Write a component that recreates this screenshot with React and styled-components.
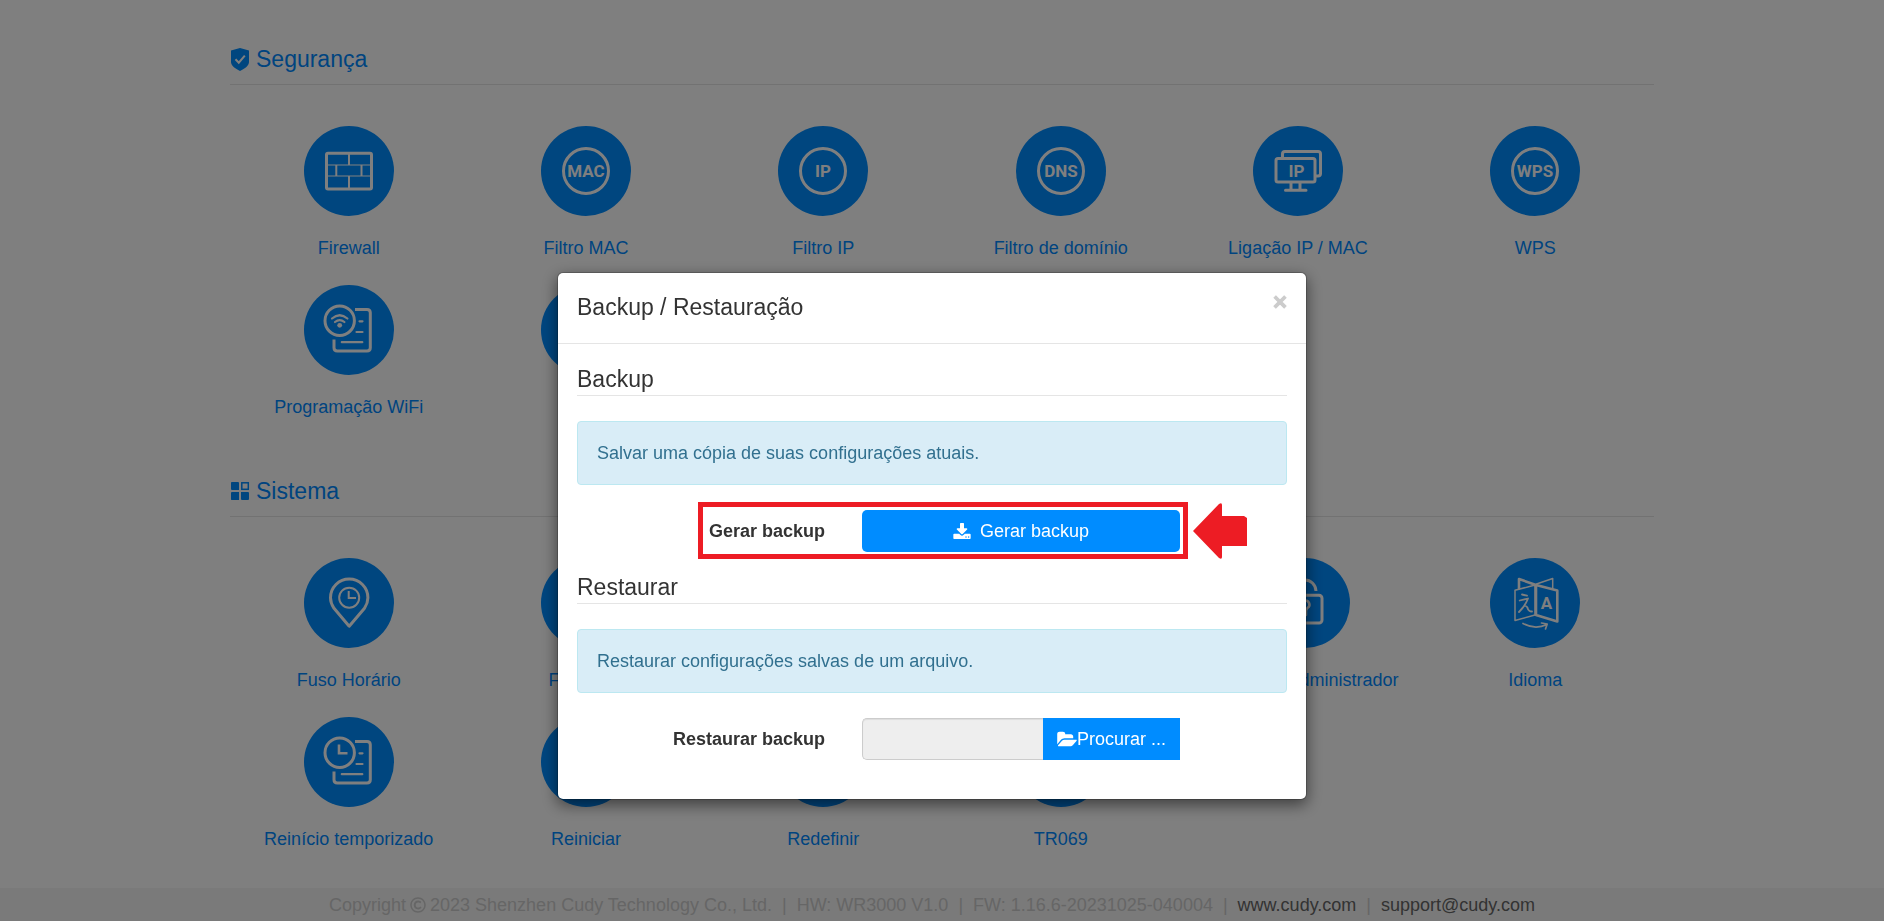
import React from "react";
import styled, { createGlobalStyle } from "styled-components";
import { FaRegCopyright } from "react-icons/fa";

const GlobalStyle = createGlobalStyle`
  * {
    box-sizing: border-box;
  }
  body {
    margin: 0;
    background-color: #ffffff;
    color: #333333;
    font-family: "Liberation Sans", Arial, sans-serif;
    font-size: 18px;
    line-height: 26px;
  }
  a {
    text-decoration: none;
  }
`;

const Page = styled.div`
  display: flex;
  flex-direction: column;
  min-height: 100vh;
`;

const Content = styled.main`
  width: 100%;
  max-width: 1424px;
  margin: 0 auto;
  padding: 12px 0;
`;

const Section = styled.section`
  padding-top: 34px;
`;

const SectionTitle = styled.h2`
  display: flex;
  align-items: center;
  gap: 6px;
  margin: 0 0 41px;
  padding: 0 0 12px;
  border-bottom: 1px solid #e5e5e5;
  color: #0088ff;
  font-size: 23px;
  font-weight: 400;
  line-height: 26px;
`;

const TileGrid = styled.div`
  display: grid;
  grid-template-columns: repeat(6, 1fr);
`;

const Tile = styled.div`
  min-width: 0;
  padding: 0 32px 24px;
  text-align: center;
`;

const TileLink = styled.a`
  display: inline-flex;
  flex-direction: column;
  align-items: center;
  gap: 19px;
  vertical-align: top;
  color: #0088ff;
  white-space: nowrap;
`;

const RoundIcon = styled.svg`
  width: 90px;
  height: 90px;
  border-radius: 50%;
  background-color: #008cff;
  fill: none;
  stroke: #ffffff;
  stroke-width: 3;
  stroke-linecap: round;
  stroke-linejoin: round;
  text {
    fill: #ffffff;
    stroke: none;
    text-anchor: middle;
    font-family: Roboto, sans-serif;
    font-size: 17px;
    font-weight: 700;
  }
`;

const Footer = styled.footer`
  display: flex;
  justify-content: center;
  align-items: center;
  gap: 10px;
  margin-top: auto;
  padding: 4px 20px 4px 0;
  background-color: #f5f5f5;
  color: #cccccc;
`;

const Copyright = styled.span`
  display: flex;
  align-items: center;
  gap: 4px;
`;

const FooterLink = styled.a`
  color: #666666;
`;

const Backdrop = styled.div`
  position: fixed;
  inset: 0;
  display: flex;
  justify-content: center;
  align-items: flex-start;
  padding: 272px 20px 0 0;
  background-color: rgba(0, 0, 0, 0.5);
`;

const Dialog = styled.div`
  width: 100%;
  max-width: 750px;
  border: 1px solid rgba(0, 0, 0, 0.2);
  border-radius: 6px;
  background-color: #ffffff;
  background-clip: padding-box;
  box-shadow: 0 5px 15px rgba(0, 0, 0, 0.5);
`;

const DialogHeader = styled.header`
  display: flex;
  justify-content: space-between;
  align-items: flex-start;
  padding: 21px 19px 23px;
  border-bottom: 1px solid #e5e5e5;
`;

const DialogTitle = styled.h4`
  margin: 0;
  font-size: 23px;
  font-weight: 400;
  line-height: 26px;
`;

const CloseButton = styled.button`
  padding: 0;
  border: none;
  background: none;
  color: #cccccc;
  font-family: inherit;
  font-size: 24px;
  font-weight: 700;
  line-height: 16px;
  -webkit-text-stroke: 1px #cccccc;
  cursor: pointer;
`;

const DialogBody = styled.div`
  padding: 0 19px 39px;
`;

const Legend = styled.h3`
  margin: 0 0 25px;
  padding: 22px 0 3px;
  border-bottom: 1px solid #e5e5e5;
  font-size: 23px;
  font-weight: 400;
  line-height: 26px;
`;

const Alert = styled.div`
  margin-bottom: 25px;
  padding: 18px 19px;
  border: 1px solid #bce8f1;
  border-radius: 4px;
  background-color: #d9edf7;
  color: #31708f;
`;

const FormRow = styled.div`
  position: relative;
  display: grid;
  grid-template-columns: 285fr 318fr 107fr;
  align-items: center;
`;

const Label = styled.label`
  padding-right: 37px;
  font-weight: 700;
  text-align: right;
`;

const Control = styled.div`
  display: flex;
  min-width: 0;
`;

const Button = styled.button`
  display: flex;
  justify-content: center;
  align-items: center;
  gap: ${props => (props.$attached ? "0" : "9px")};
  flex: ${props => (props.$attached ? "none" : "1")};
  height: 42px;
  padding: 0 14px;
  border: none;
  border-radius: ${props => (props.$attached ? "0" : "5px")};
  background-color: #008cff;
  color: #ffffff;
  font-family: inherit;
  font-size: 18px;
  cursor: pointer;
`;

const FileName = styled.input`
  flex: 1;
  min-width: 0;
  height: 42px;
  border: 1px solid #cccccc;
  border-right: none;
  border-radius: 5px 0 0 5px;
  background-color: #eeeeee;
  box-shadow: inset 0 1px 1px rgba(0, 0, 0, 0.075);
  font-size: 18px;
`;

const Highlight = styled.div`
  position: absolute;
  top: -8px;
  right: 99px;
  bottom: -7px;
  left: 121px;
  border: 5px solid #ed1c24;
  pointer-events: none;
`;

const HighlightArrow = styled.svg`
  position: absolute;
  top: -7px;
  right: 40px;
  fill: #ed1c24;
`;

const ShieldIcon = () => (
  <svg width="20" height="24" viewBox="0 0 20 24" aria-hidden="true">
    <path
      d="M10 1L19 3.6V15c0 3.600-4 6.500-9 9-5-2.500-9-5.400-9-9V3.600z"
      fill="#008cff"
    />
    <path
      d="M5.500 12.200l3.300 3.500 6-7"
      fill="none"
      stroke="#ffffff"
      strokeWidth="2"
    />
  </svg>
);

const BlocksIcon = () => (
  <svg width="20" height="20" viewBox="0 0 20 20" fill="#008cff" aria-hidden="true">
    <path d="M1.500 1H8q1 0 1 1v7H2q-1 0-1-1V1.500z" />
    <rect x="11.800" y="1.800" width="6.500" height="6.500" fill="none" stroke="#008cff" strokeWidth="1.500" />
    <path d="M2 11h7v8H1.500l-.5-.5V12q0-1 1-1zM11 11h7q1 0 1 1v6q0 1-1 1h-6q-1 0-1-1z" />
  </svg>
);

const DownloadIcon = () => (
  <svg width="18" height="16" viewBox="0 0 1664 1536" fill="currentColor" aria-hidden="true">
    <path d="M1280 1344q0-26-19-45t-45-19-45 19-19 45 19 45 45 19 45-19 19-45zm256 0q0-26-19-45t-45-19-45 19-19 45 19 45 45 19 45-19 19-45zm128-224v320q0 40-28 68t-68 28H96q-40 0-68-28t-28-68v-320q0-40 28-68t68-28h465l135 136q58 56 136 56t136-56l136-136h464q40 0 68 28t28 68zm-325-569q17 41-14 70l-448 448q-18 19-45 19t-45-19L339 621q-31-29-14-70 17-39 59-39h256V64q0-26 19-45t45-19h256q26 0 45 19t19 45v448h256q42 0 59 39z" />
  </svg>
);

const FolderOpenIcon = () => (
  <svg width="20" height="16" viewBox="0 64 1879 1536" fill="currentColor" aria-hidden="true">
    <path d="M1879 952q0 31-31 66l-336 396q-43 51-120.500 86.500T1248 1536H160q-34 0-60.500-13T73 1480q0-31 31-66l336-396q43-51 120.500-86.500T704 896h1088q34 0 60.500 13t26.500 43zM1536 608v160H704q-94 0-197 47.500T343 935L6 1331l-5 6q0-4-.5-12.500T0 1312V352q0-92 66-158t158-66h320q92 0 158 66t66 158v32h544q92 0 158 66t66 158z" />
  </svg>
);

const Badge = ({ text }) => (
  <>
    <circle cx="45" cy="45" r="22.500" />
    <text x="45" y="51">{text}</text>
  </>
);

const SheetLines = () => (
  <>
    <path d="M51 24.500h12q3.300 0 3.300 3.300v35q0 3.300-3.300 3.300H33.300q-3.300 0-3.300-3.300V54.500" strokeLinecap="butt" />
    <path d="M55.500 36.300h3M52.500 47h6M37.800 57.200h20.500" strokeWidth="2.200" />
  </>
);

const icons = {
  firewall: (
    <>
      <rect x="22.500" y="27.200" width="45" height="35.800" rx="1.500" />
      <path d="M24 39h42M24 50h42" strokeWidth="1.200" />
      <path d="M45 28v11M45 50v12M32.300 39v11M57.500 39v11" strokeWidth="2" strokeLinecap="butt" />
    </>
  ),
  mac: <Badge text="MAC" />,
  ip: <Badge text="IP" />,
  dns: <Badge text="DNS" />,
  wps: <Badge text="WPS" />,
  binding: (
    <>
      <path d="M29.500 31v-3q0-2.500 2.500-2.500h33q2.500 0 2.500 2.500v19.500q0 2.500-2.500 2.500h-2" />
      <rect x="23" y="32.500" width="39" height="23.500" rx="2" />
      <path d="M38 57v7M47 57v7M32.500 64.300h20.500" />
      <text x="43.500" y="50.500">IP</text>
    </>
  ),
  wifi: (
    <>
      <SheetLines />
      <circle cx="35.700" cy="35.700" r="14.700" />
      <circle cx="35.700" cy="40.300" r="2.400" fill="#ffffff" stroke="none" />
      <path d="M28 33.500q7.700-6.500 15.400 0M31 37q4.700-3.800 9.400 0" strokeWidth="2.200" />
    </>
  ),
  timer: (
    <>
      <SheetLines />
      <circle cx="35.700" cy="35.700" r="14.700" />
      <path d="M35 27.500v8.700h8.500" strokeWidth="2.600" strokeLinecap="butt" strokeLinejoin="miter" />
    </>
  ),
  timezone: (
    <>
      <path d="M45.200 68.200L30 50.300Q26.500 45 26.500 39.700a18.700 18.700 0 0 1 37.400 0Q63.900 45 60.500 50.300z" />
      <circle cx="45.200" cy="39.700" r="10" strokeWidth="2" />
      <path d="M44.700 33v7H52" strokeWidth="2" strokeLinecap="butt" strokeLinejoin="miter" />
    </>
  ),
  lock: (
    <>
      <rect x="28" y="37.300" width="34" height="27.800" rx="3" />
      <path d="M34 37v-3a11 11.500 0 0 1 22-1" strokeLinecap="butt" />
      <path d="M41.500 47.500a4 4 0 1 1 6 2.500q-1.500 1.500-1.500 3v4" strokeWidth="2.500" />
    </>
  ),
  language: (
    <>
      <path d="M45 27L25 32.300v30.200L45 57zM46.500 26l16.200-5.500v10" strokeWidth="1.500" />
      <path d="M29 30.500V21l17 6M46 27l21.300 5.500v31L46 57z" strokeWidth="2.600" />
      <path d="M33 65.500q12 6.500 24 1M51.500 65l5.700 1-1.700 5" strokeWidth="1.700" />
      <path d="M32 36.500l5 1.200M29.700 42.500l8.300-2q-2.500 7-9 13.500M34.500 47.500q3 1 3 2.500 1 3.500 4.500 3.500" strokeWidth="1.800" />
      <text x="56.500" y="51">A</text>
    </>
  ),
  refresh: <path d="M62 45a17 17 0 1 1-5-12l4 4M61 27v10H51" />
};

const sections = [
  {
    title: "Segurança",
    icon: <ShieldIcon />,
    items: [
      { label: "Firewall", icon: "firewall" },
      { label: "Filtro MAC", icon: "mac" },
      { label: "Filtro IP", icon: "ip" },
      { label: "Filtro de domínio", icon: "dns" },
      { label: "Ligação IP / MAC", icon: "binding" },
      { label: "WPS", icon: "wps" },
      { label: "Programação WiFi", icon: "wifi" },
      { label: "DMZ", icon: "lock" }
    ]
  },
  {
    title: "Sistema",
    icon: <BlocksIcon />,
    items: [
      { label: "Fuso Horário", icon: "timezone" },
      { label: "Firmware", icon: "refresh" },
      { label: "Backup", icon: "refresh" },
      { label: "Registro", icon: "timer" },
      { label: "Conta de administrador", icon: "lock" },
      { label: "Idioma", icon: "language" },
      { label: "Reinício temporizado", icon: "timer" },
      { label: "Reiniciar", icon: "refresh" },
      { label: "Redefinir", icon: "refresh" },
      { label: "TR069", icon: "refresh" }
    ]
  }
];

const BackupDialog = () => (
  <Backdrop>
    <Dialog role="dialog" aria-labelledby="dialog-title">
      <DialogHeader>
        <DialogTitle id="dialog-title">Backup / Restauração</DialogTitle>
        <CloseButton type="button" aria-label="Fechar">
          ×
        </CloseButton>
      </DialogHeader>
      <DialogBody>
        <Legend>Backup</Legend>
        <Alert>Salvar uma cópia de suas configurações atuais.</Alert>
        <FormRow>
          <Label htmlFor="generate">Gerar backup</Label>
          <Control>
            <Button id="generate" type="button">
              <DownloadIcon />
              Gerar backup
            </Button>
          </Control>
          <Highlight />
          <HighlightArrow width="54" height="56" viewBox="0 0 54 56" aria-hidden="true">
            <path d="M0 28L26 1q3-2 3 1v11h22l3 2v28H29v11q0 3-3 1z" />
          </HighlightArrow>
        </FormRow>
        <Legend>Restaurar</Legend>
        <Alert>Restaurar configurações salvas de um arquivo.</Alert>
        <FormRow>
          <Label htmlFor="archive">Restaurar backup</Label>
          <Control>
            <FileName id="archive" type="text" readOnly />
            <Button type="button" $attached>
              <FolderOpenIcon />
              Procurar ...
            </Button>
          </Control>
        </FormRow>
      </DialogBody>
    </Dialog>
  </Backdrop>
);

export default () => (
  <>
    <GlobalStyle />
    <Page>
      <Content>
        {sections.map(section => (
          <Section key={section.title}>
            <SectionTitle>
              {section.icon}
              {section.title}
            </SectionTitle>
            <TileGrid>
              {section.items.map(item => (
                <Tile key={item.label}>
                  <TileLink href="#">
                    <RoundIcon viewBox="0 0 90 90" aria-hidden="true">
                      {icons[item.icon]}
                    </RoundIcon>
                    {item.label}
                  </TileLink>
                </Tile>
              ))}
            </TileGrid>
          </Section>
        ))}
      </Content>
      <Footer>
        <Copyright>
          Copyright <FaRegCopyright size={16} /> 2023 Shenzhen Cudy Technology Co., Ltd.
        </Copyright>
        <span>|</span>
        <span>HW: WR3000 V1.0</span>
        <span>|</span>
        <span>FW: 1.16.6-20231025-040004</span>
        <span>|</span>
        <FooterLink href="#">www.cudy.com</FooterLink>
        <span>|</span>
        <FooterLink href="#">support@cudy.com</FooterLink>
      </Footer>
    </Page>
    <BackupDialog />
  </>
);
